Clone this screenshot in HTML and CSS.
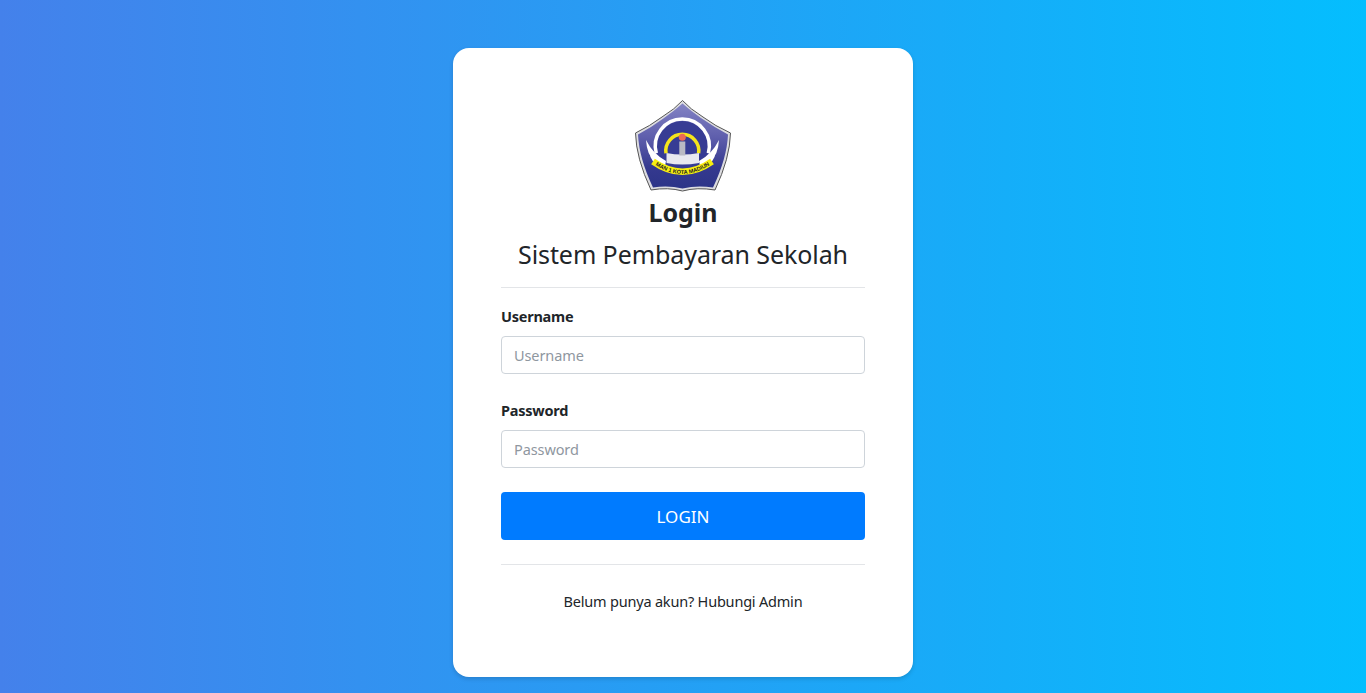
FILE: index.html
```html
<!DOCTYPE html>
<html lang="id">
<head>
<meta charset="utf-8">
<title>Login</title>
<link rel="stylesheet" href="styles.css">
</head>
<body>
<main class="page">
  <section class="card">
    <header class="head">
      <svg class="logo" viewBox="0 0 96 92" aria-label="Logo sekolah">
        <defs>
          <linearGradient id="shield" x1="0" y1="0" x2="0" y2="1">
            <stop offset="0" stop-color="#8484c4"/>
            <stop offset="0.4" stop-color="#5e5eac"/>
            <stop offset="0.75" stop-color="#35398f"/>
            <stop offset="1" stop-color="#2c3488"/>
          </linearGradient>
          <path id="arc" d="M18 63.500 Q47.500 84.500 77 63.500"/>
        </defs>
        <path d="M47.500 0.500 Q55 9 68 17 Q80 26 95.500 33 Q95 58 80 90 Q62 87 47.500 91 Q33 87 16 90 Q1 58 0.500 33 Q15 26 27 17 Q40 9 47.500 0.500Z" fill="#dcdce0" stroke="#555" stroke-width="1"/>
        <path d="M47.500 3.500 Q56 11 66 18 Q79 27 93 34.500 Q92 58 78 87.500 Q62 85 47.500 88.500 Q33 85 18 87.500 Q4 58 3 34.500 Q17 27 29 18 Q39 11 47.500 3.500Z" fill="url(#shield)"/>
        <circle cx="47.300" cy="47" r="26" fill="#373c94"/>
        <path d="M21.300 53.300 A27 27 0 1 1 73.300 53.300" fill="none" stroke="#fff" stroke-width="3.500"/>
        <path d="M11 40 Q12 56 20 61 L30 66 L31 61 Q18 54 11 40Z M14 52 Q16 62 24 66 L29 67 L22 61 Q17 58 14 52Z M84 40 Q83 56 75 61 L65 66 L64 61 Q77 54 84 40Z M81 52 Q79 62 71 66 L66 67 L73 61 Q78 58 81 52Z" fill="#fff"/>
        <path d="M31 53.300 A16.500 16.500 0 1 1 63.600 53.300" fill="none" stroke="#f5e51b" stroke-width="3.500"/>
        <path d="M31.500 53 Q47 56 64 53 L64 63 Q47 66 31.500 63Z" fill="#e8e8f0"/>
        <rect x="44.300" y="41.500" width="6" height="14" fill="#b9b9c4"/>
        <circle cx="47.300" cy="37.300" r="3.500" fill="#ee6a55"/>
        <path d="M18 61.500 Q47.500 82 77 61.500" fill="none" stroke="#f7ee10" stroke-width="6.500"/>
        <text class="logo-text"><textPath href="#arc" startOffset="50%" text-anchor="middle">MAN 1 KOTA MADIUN</textPath></text>
      </svg>
      <h1 class="title">Login</h1>
      <p class="subtitle">Sistem Pembayaran Sekolah</p>
    </header>
    <hr class="rule">
    <form class="form">
      <div class="field">
        <label class="label" for="username">Username</label>
        <input class="input" id="username" type="text" placeholder="Username">
      </div>
      <div class="field">
        <label class="label" for="password">Password</label>
        <input class="input" id="password" type="password" placeholder="Password">
      </div>
      <button class="button" type="button">LOGIN</button>
    </form>
    <hr class="rule">
    <p class="note">Belum punya akun? Hubungi Admin</p>
  </section>
</main>
</body>
</html>
```
FILE: styles.css
```css
* { box-sizing: border-box; }
html, body { margin: 0; height: 100%; }
body {
  background: linear-gradient(90deg, #4481eb, #04befe);
  color: #212529;
  font-family: "Noto Sans", sans-serif;
  overflow: hidden;
}
.page { display: flex; justify-content: center; padding: 48px 0 16px; }
.card {
  width: 460px;
  height: 629px;
  padding: 48px;
  background: #fff;
  border-radius: 16px;
  box-shadow: 0 2px 4px rgba(0, 0, 0, 0.15);
}
.head { display: flex; flex-direction: column; align-items: center; }
.logo { display: block; width: 96px; height: 92px; margin-top: 4px; }
.logo-text { font: 700 5.6px "Liberation Sans", sans-serif; fill: #222; }
.title { margin: 0; font-size: 25px; font-weight: 700; line-height: 40px; }
.subtitle { margin: 2px 0 0; font-size: 25px; line-height: 40px; letter-spacing: -0.08px; }
.rule { margin: 0; border: 0; border-top: 1px solid #e3e5e8; }
.head + .rule { margin: 13px 0 16px; }
.form { display: flex; flex-direction: column; }
.field { display: flex; flex-direction: column; gap: 8px; margin-bottom: 24px; }
.label { font-size: 14.5px; font-weight: 700; line-height: 24px; letter-spacing: -0.25px; }
.input {
  height: 38px;
  padding: 0 12px;
  border: 1px solid #ced4da;
  border-radius: 4px;
  color: #495057;
  font: 14.5px "Noto Sans", sans-serif;
  letter-spacing: -0.1px;
}
.input::placeholder { color: #8f979f; opacity: 1; }
.button {
  height: 48px;
  margin-bottom: 24px;
  border: 0;
  border-radius: 4px;
  background: #007bff;
  color: #fff;
  font: 17px "Noto Sans", sans-serif;
}
.note { margin: 24px 0 0; font-size: 14.5px; line-height: 24px; letter-spacing: -0.2px; text-align: center; }
```
